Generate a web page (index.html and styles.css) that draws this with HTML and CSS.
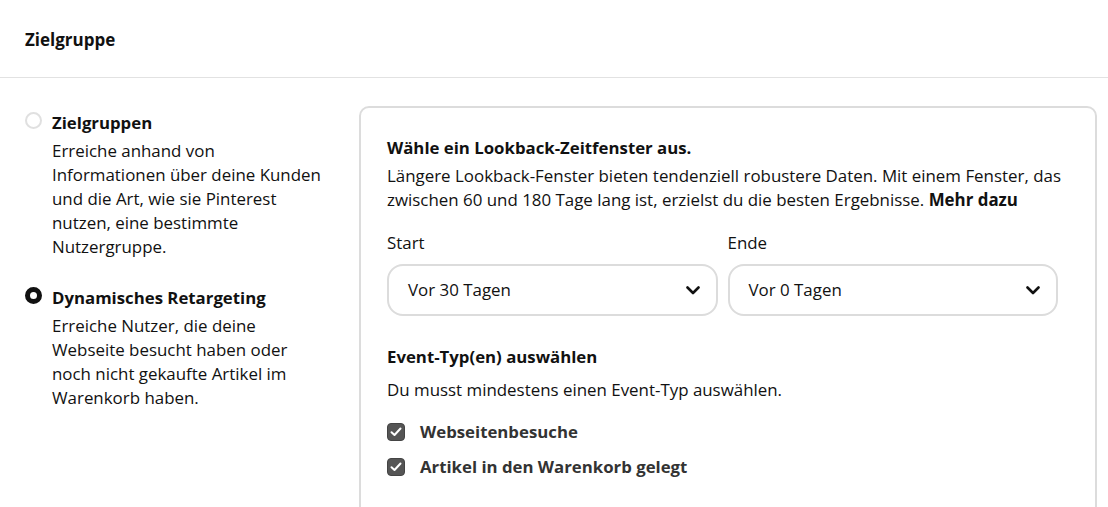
FILE: index.html
```html
<!DOCTYPE html>
<html lang="de">

<head>
    <meta charset="UTF-8">
    <meta name="viewport" content="width=device-width, initial-scale=1.0">
    <title>Zielgruppe</title>
    <link rel="stylesheet" href="styles.css">
</head>

<body>
    <header class="section-header">Zielgruppe</header>

    <div class="section-body">
        <!-- Targeting type -->
        <div class="options">
            <label class="option">
                <span class="radio"></span>
                <span class="option-text">
                    <span class="option-title">Zielgruppen</span>
                    <span class="option-desc">Erreiche anhand von Informationen über deine Kunden und die Art, wie sie Pinterest nutzen, eine bestimmte Nutzergruppe.</span>
                </span>
            </label>
            <label class="option">
                <span class="radio checked"></span>
                <span class="option-text">
                    <span class="option-title">Dynamisches Retargeting</span>
                    <span class="option-desc">Erreiche Nutzer, die deine Webseite besucht haben oder noch nicht gekaufte Artikel im Warenkorb haben.</span>
                </span>
            </label>
        </div>

        <!-- Retargeting settings -->
        <div class="card">
            <h2 class="card-title">Wähle ein Lookback-Zeitfenster aus.</h2>
            <p class="card-text intro">Längere Lookback-Fenster bieten tendenziell robustere Daten. Mit einem Fenster, das zwischen 60 und 180 Tage lang ist, erzielst du die besten Ergebnisse. <b>Mehr dazu</b></p>

            <div class="range">
                <div class="field">
                    <span class="field-label">Start</span>
                    <div class="select">
                        <span>Vor 30 Tagen</span>
                        <svg class="chevron" viewBox="0 0 14 9" width="14" height="9"><path d="M1.5 1.5 7 7l5.5-5.5" /></svg>
                    </div>
                </div>
                <div class="field">
                    <span class="field-label">Ende</span>
                    <div class="select">
                        <span>Vor 0 Tagen</span>
                        <svg class="chevron" viewBox="0 0 14 9" width="14" height="9"><path d="M1.5 1.5 7 7l5.5-5.5" /></svg>
                    </div>
                </div>
            </div>

            <h2 class="card-title events-title">Event-Typ(en) auswählen</h2>
            <p class="card-text hint">Du musst mindestens einen Event-Typ auswählen.</p>

            <div class="checks">
                <label class="check-row">
                    <span class="checkbox"><svg viewBox="0 0 12 10" width="12" height="10"><path d="M1.5 5.2 4.5 8l6-6.5" /></svg></span>
                    Webseitenbesuche
                </label>
                <label class="check-row">
                    <span class="checkbox"><svg viewBox="0 0 12 10" width="12" height="10"><path d="M1.5 5.2 4.5 8l6-6.5" /></svg></span>
                    Artikel in den Warenkorb gelegt
                </label>
            </div>
        </div>
    </div>
</body>

</html>
```

FILE: styles.css
```css
* {
    margin: 0;
    padding: 0;
    box-sizing: border-box;
    font-family: 'Open Sans', 'Noto Sans', sans-serif;
}

body {
    background-color: #ffffff;
    color: #111;
    font-size: 16.9px;
    line-height: 24px;
    overflow: hidden;
}

.section-header {
    padding: 28px 25px 25px;
    font-size: 17px;
    font-weight: 700;
    border-bottom: 1px solid #e2e2e2;
}

.section-body {
    display: flex;
    align-items: flex-start;
    padding: 28px 11px 0 25px;
}

.options {
    flex: none;
    width: 300px;
    margin-right: 34px;
    padding-top: 5px;
    display: flex;
    flex-direction: column;
    gap: 27px;
}

.option {
    display: flex;
    gap: 10px;
    cursor: pointer;
}

.radio {
    flex: none;
    width: 17px;
    height: 17px;
    margin-top: 1px;
    border: 2px solid #e0e0e0;
    border-radius: 50%;
}

.radio.checked {
    border: 5px solid #111;
}

.option-text {
    display: flex;
    flex-direction: column;
    gap: 4px;
}

.option-title {
    font-weight: 700;
    font-size: 16.8px;
}

.card {
    flex: 1;
    height: 420px;
    border: 2px solid #dcdcdc;
    border-radius: 10px;
    padding: 28px 28px 0 26px;
}

.card-title {
    font-size: 16.8px;
    font-weight: 700;
    line-height: 24px;
}

.intro {
    margin-top: 4px;
}

.range {
    display: flex;
    gap: 10px;
    width: 671px;
    margin-top: 19px;
}

.field {
    flex: 1;
    display: flex;
    flex-direction: column;
    gap: 9px;
}

.select {
    height: 52px;
    border: 2px solid #dcdcdc;
    border-radius: 16px;
    padding: 0 16px 0 19px;
    display: flex;
    align-items: center;
    justify-content: space-between;
}

.chevron path {
    fill: none;
    stroke: #111;
    stroke-width: 2.6;
    stroke-linecap: round;
    stroke-linejoin: round;
}

.events-title {
    margin-top: 29px;
}

.hint {
    margin-top: 9px;
}

.checks {
    margin-top: 18px;
    display: flex;
    flex-direction: column;
    gap: 11px;
}

.check-row {
    display: flex;
    align-items: center;
    gap: 15px;
    font-size: 16.8px;
    font-weight: 700;
    color: #333;
    cursor: pointer;
}

.checkbox {
    width: 18px;
    height: 18px;
    border-radius: 4px;
    background-color: #555;
    border: 1px solid #444;
    display: flex;
    align-items: center;
    justify-content: center;
}

.checkbox path {
    fill: none;
    stroke: #fff;
    stroke-width: 2;
    stroke-linecap: round;
    stroke-linejoin: round;
}
```
